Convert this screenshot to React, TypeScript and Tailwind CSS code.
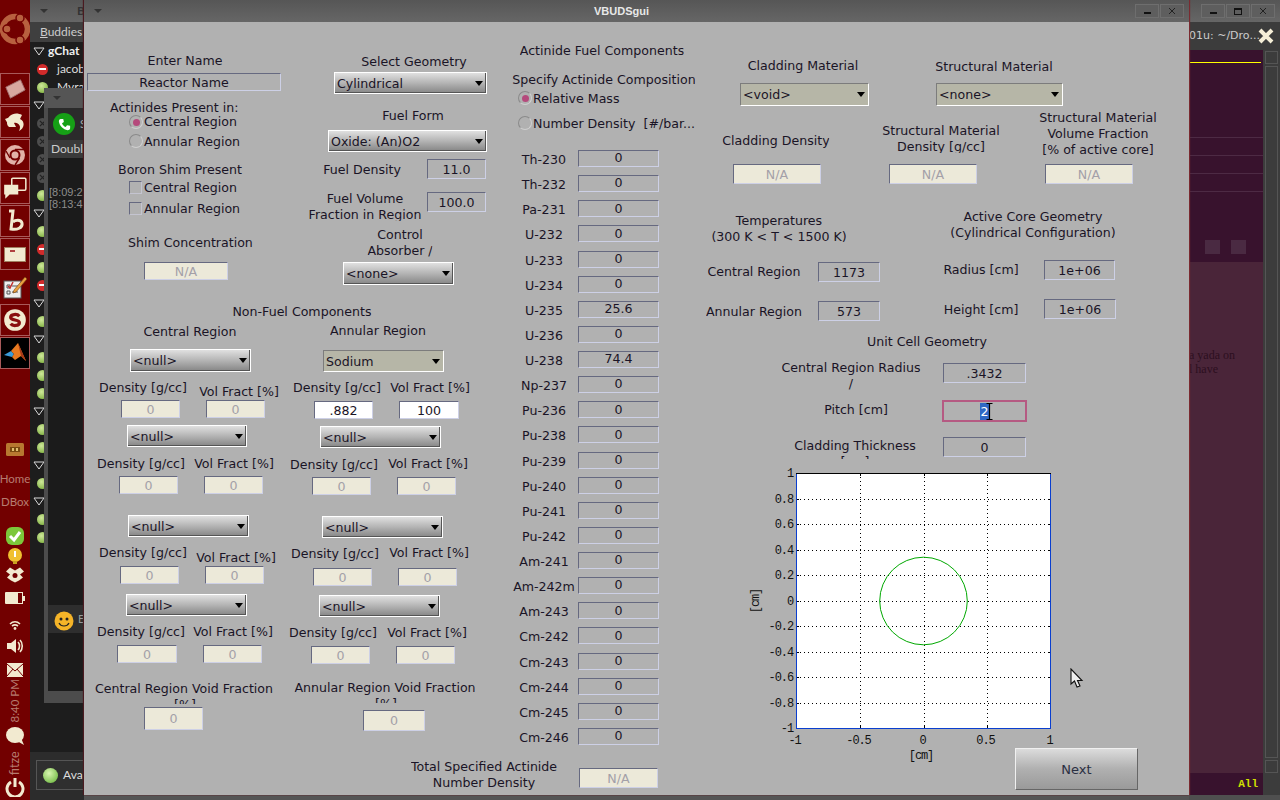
import React from 'react';

const Label = ({ c, children }: { c: string; children: React.ReactNode }) => (
  <div className={'absolute mt-[1px] -translate-x-1/2 text-center whitespace-nowrap leading-4 overflow-hidden ' + c}>{children}</div>
);
const Left = ({ c, children }: { c: string; children: React.ReactNode }) => (
  <div className={'absolute mt-[1px] whitespace-nowrap leading-4 ' + c}>{children}</div>
);
const Box = ({ c, v, kind = 'plain' }: { c: string; v: string; kind?: 'plain' | 'off' | 'on' }) => (
  <div
    className={
      'absolute flex items-center justify-center pt-[2px] border border-t-[#666980] border-l-[#666980] border-r-[#cdd0e6] border-b-[#cdd0e6] leading-none ' +
      (kind === 'off' ? 'bg-[#ece9d9] text-[#a3a0a8] ' : kind === 'on' ? 'bg-white text-[#1a1426] ' : 'text-[#1a1426] ') +
      c
    }
  >
    {v}
  </div>
);
const Select = ({ c, v, tan = false }: { c: string; v: string; tan?: boolean }) => (
  <div
    className={
      'absolute flex items-center justify-between pl-[2px] pr-[3px] border ' +
      (tan
        ? 'bg-[#b6b6a7] border-t-[#7c7c7c] border-l-[#7c7c7c] border-r-white border-b-white '
        : 'bg-gradient-to-b from-[#e0e0e0] via-[#b4b4b4] to-[#868686] border-white shadow-[inset_-1px_-1px_0_#555] ') +
      c
    }
  >
    <span className="leading-none mt-[2px]">{v}</span>
    <span className="w-0 h-0 border-x-[4px] border-x-transparent border-t-[5px] border-t-black" />
  </div>
);
const Radio = ({ c, on = false }: { c: string; on?: boolean }) => (
  <div className={'absolute w-[14px] h-[14px] rounded-full border border-[#d0d0d0] border-t-[#8a8a8a] border-l-[#8a8a8a] flex items-center justify-center ' + c}>
    {on && <div className="w-[7px] h-[7px] rounded-full bg-[#b54a7c]" />}
  </div>
);
const Check = ({ c }: { c: string }) => (
  <div className={'absolute w-[13px] h-[13px] border border-t-[#666980] border-l-[#666980] border-r-[#c4c4d0] border-b-[#c4c4d0] ' + c} />
);

const actinides = [
  ['Th-230', '0'], ['Th-232', '0'], ['Pa-231', '0'], ['U-232', '0'], ['U-233', '0'], ['U-234', '0'],
  ['U-235', '25.6'], ['U-236', '0'], ['U-238', '74.4'], ['Np-237', '0'], ['Pu-236', '0'], ['Pu-238', '0'],
  ['Pu-239', '0'], ['Pu-240', '0'], ['Pu-241', '0'], ['Pu-242', '0'], ['Am-241', '0'], ['Am-242m', '0'],
  ['Am-243', '0'], ['Cm-242', '0'], ['Cm-243', '0'], ['Cm-244', '0'], ['Cm-245', '0'], ['Cm-246', '0'],
];

const Plot = () => {
  const xs = [-1, -0.5, 0, 0.5, 1];
  const ys = [1, 0.8, 0.6, 0.4, 0.2, 0, -0.2, -0.4, -0.6, -0.8, -1];
  const X = (v: number) => Math.round(796 + (v + 1) * 127.5) + 0.5;
  const Y = (v: number) => Math.round(473 + (1 - v) * 127.5) + 0.5;
  return (
    <svg viewBox="745 465 320 300" className="absolute left-[661px] top-[443px] w-[320px] h-[300px]">
      <rect x="796" y="473" width="255" height="255" fill="#fff" />
      <g shapeRendering="crispEdges">
        {xs.slice(1, -1).map((v) => (
          <line key={v} x1={X(v)} x2={X(v)} y1="473" y2="728" stroke="#000" strokeWidth="1" strokeDasharray="1 3" />
        ))}
        {ys.slice(1, -1).map((v) => (
          <line key={v} y1={Y(v)} y2={Y(v)} x1="796" x2="1051" stroke="#000" strokeWidth="1" strokeDasharray="1 3" />
        ))}
        {xs.slice(1, -1).map((v) => (
          <g key={v} stroke="#000">
            <line x1={X(v)} x2={X(v)} y1="473" y2="476" />
            <line x1={X(v)} x2={X(v)} y1="725" y2="728" />
          </g>
        ))}
        {ys.slice(1, -1).map((v) => (
          <g key={v} stroke="#000">
            <line y1={Y(v)} y2={Y(v)} x1="796" x2="799" />
            <line y1={Y(v)} y2={Y(v)} x1="1048" x2="1051" />
          </g>
        ))}
      </g>
      <circle cx="923.5" cy="601" r="43.8" fill="none" stroke="#00a800" strokeWidth="1" />
      <rect x="796.5" y="473.5" width="254" height="255" fill="none" stroke="#0a3ecf" strokeWidth="1" />
      <line x1="796" x2="1051" y1="473.5" y2="473.5" stroke="#000" />
      <g fontFamily="'Liberation Mono', monospace" fontSize="12" letterSpacing="-1.1" fill="#111">
        {ys.map((v) => (
          <text key={v} x="793" y={Y(v) + 3.5} textAnchor="end">
            {v === 0 ? '0' : String(v)}
          </text>
        ))}
        {xs.map((v) => (
          <text key={v} x={X(v) - 2} y="744" textAnchor="middle">
            {String(v)}
          </text>
        ))}
        <text x="921" y="759" textAnchor="middle">[cm]</text>
        <text x="0" y="0" textAnchor="middle" transform="translate(759 601) rotate(-90)">[cm]</text>
      </g>
    </svg>
  );
};

const Tile = ({ children, c = '' }: { children: React.ReactNode; c?: string }) => (
  <div className={'w-[30px] h-[32px] border border-[#a85a5a] flex items-center justify-center ' + c}>{children}</div>
);

const cream = '#f2ead0';
const Launcher = () => (
  <div className="w-[30px] h-[800px] shrink-0 bg-[#720000] flex flex-col items-center relative z-10 font-['Lato',sans-serif]">
    <svg viewBox="0 0 30 40" className="w-[30px] h-[40px] mt-[9px] mb-[24px]">
      <circle cx="15" cy="20" r="12.5" fill="none" stroke="#b8603f" strokeWidth="5.5" />
      <circle cx="7" cy="20" r="4" fill="#b8603f" stroke="#720000" strokeWidth="1.5" />
      <circle cx="20" cy="9" r="4" fill="#b8603f" stroke="#720000" strokeWidth="1.5" />
      <circle cx="20" cy="31" r="4" fill="#b8603f" stroke="#720000" strokeWidth="1.5" />
    </svg>
    <div className="flex flex-col gap-[1px]">
      <Tile>
        <svg viewBox="0 0 24 24" className="w-[22px] h-[22px]">
          <path d="M2 10 L18 2 L23 13 L7 22 Z" fill="#d8a8a0" stroke="#a07070" />
        </svg>
      </Tile>
      <Tile>
        <svg viewBox="0 0 24 24" className="w-[24px] h-[24px]">
          <path d="M4 13 C4 5 12 1 19 5 L17 9 C22 11 22 18 16 21 C19 16 15 12 11 13 L13 17 L6 17 C5 16 4 15 4 13Z" fill={cream} />
          <path d="M10 6 L2 9 L5 14Z" fill={cream} />
        </svg>
      </Tile>
      <Tile>
        <svg viewBox="0 0 24 24" className="w-[24px] h-[24px]">
          <circle cx="12" cy="12" r="10" fill="#e2b2a8" />
          <circle cx="12" cy="12" r="5.5" fill="#720000" />
          <circle cx="12" cy="12" r="3.5" fill="#e2b2a8" />
          <path d="M12 6.5 L21 6.5 M7 15 L3 8 M16.5 15 L12 22" stroke="#720000" strokeWidth="1.4" />
        </svg>
      </Tile>
      <Tile>
        <svg viewBox="0 0 24 24" className="w-[26px] h-[26px]">
          <rect x="9" y="3" width="13" height="11" rx="1" fill="none" stroke={cream} strokeWidth="1.4" />
          <path d="M2 9 H15 V18 H7 L3 22 V18 H2Z" fill={cream} />
        </svg>
      </Tile>
      <Tile>
        <svg viewBox="0 0 24 24" className="w-[24px] h-[24px]">
          <path d="M6 2 L10 2 L8 20 C14 21 20 19 19 14 C18 10 12 11 10 13" fill="none" stroke={cream} strokeWidth="3" />
        </svg>
      </Tile>
      <Tile>
        <div className="w-[22px] h-[15px] bg-[#f2ead0] border border-[#a08060] relative">
          <span className="absolute left-[5px] top-[2px] w-[5px] h-[2px] bg-[#b04040]" />
        </div>
      </Tile>
      <div className="w-[30px] h-[32px] flex items-center justify-center">
        <svg viewBox="0 0 26 26" className="w-[26px] h-[26px]">
          <rect x="2" y="7" width="17" height="17" fill="#eee" stroke="#555" />
          <path d="M5 11 H8 V14 H5Z M5 17 H8 V20 H5Z M10 12 H16 M10 18 H16" fill="none" stroke="#555" />
          <path d="M6 12 L8 14 L11 8" stroke="#c03030" strokeWidth="1.5" fill="none" />
          <path d="M12 16 L23 3 L25 5 L14 18 L11 19Z" fill="#e8a040" stroke="#704010" strokeWidth=".6" />
        </svg>
      </div>
      <Tile>
        <svg viewBox="0 0 24 24" className="w-[26px] h-[26px]">
          <circle cx="12" cy="12" r="10" fill={cream} />
          <path d="M16 8.5 C14 6 8 6.5 8 9.5 C8 13 16 11 16 14.5 C16 17.5 10 18 8 15.5" fill="none" stroke="#8a1010" strokeWidth="3" />
        </svg>
      </Tile>
      <Tile c="bg-black border-[#888]">
        <svg viewBox="0 0 24 24" className="w-[24px] h-[24px]">
          <path d="M1 14 L8 10 L11 13 L9 16Z" fill="#3a9ad8" />
          <path d="M8 10 L15 2 L23 20 L18 15 L12 19 L9 16 L11 13Z" fill="#e87a20" />
          <path d="M15 2 L23 20 L18 15 Z" fill="#a83818" />
        </svg>
      </Tile>
    </div>
    <svg viewBox="0 0 20 18" className="w-[20px] h-[18px] mt-[71px]">
      <rect x="1" y="3" width="18" height="13" rx="1.5" fill="#b87830" />
      <rect x="5" y="7" width="10" height="5" fill="#7a4a10" />
      <rect x="7" y="8" width="2" height="3" fill="#e0c070" />
      <rect x="11" y="8" width="2" height="3" fill="#e0c070" />
    </svg>
    <div className="mt-[13px] h-[16px] leading-4 text-[11.5px] text-[#b67c70]">Home</div>
    <div className="mt-[7px] h-[16px] leading-4 text-[11.5px] text-[#b67c70]">DBox</div>
    <svg viewBox="0 0 20 20" className="w-[20px] h-[20px] mt-[16px]">
      <rect x="1" y="1" width="18" height="18" rx="6" fill="#7cc83a" />
      <path d="M5 10 L9 14 L15 6" fill="none" stroke="#fff" strokeWidth="3" />
    </svg>
    <svg viewBox="0 0 16 18" className="w-[16px] h-[18px] mt-[1px]">
      <circle cx="8" cy="8" r="7" fill="#f0c030" />
      <rect x="6" y="14" width="4" height="3" fill="#c8a020" />
      <path d="M8 4 V10" stroke="#fff" strokeWidth="2" />
    </svg>
    <svg viewBox="0 0 20 18" className="w-[20px] h-[19px]">
      <path d="M5 2 L10 5 L15 2 L19 6 L15 9 L18 12 L14 15 L10 17 L6 15 L2 12 L5 9 L1 6Z" fill={cream} />
      <circle cx="10" cy="10" r="2.5" fill="#720000" />
    </svg>
    <div className="mt-[7px] flex items-center h-[14px]">
      <div className="w-[12px] h-[12px] bg-[#f2ead0] rounded-l-[1px]" />
      <div className="w-[6px] h-[12px] border border-[#f2ead0]" />
      <div className="w-[2px] h-[5px] bg-[#f2ead0]" />
    </div>
    <svg viewBox="0 0 16 12" className="w-[16px] h-[12px] mt-[14px]">
      <path d="M3 5 C6 2 10 2 13 5 M5 7 C7 5.500 9 5.500 11 7" fill="none" stroke={cream} strokeWidth="1.6" />
      <circle cx="8" cy="9.500" r="1.4" fill={cream} />
    </svg>
    <svg viewBox="0 0 18 18" className="w-[18px] h-[18px] mt-[6px]">
      <path d="M1 6 H5 L10 2 V16 L5 12 H1Z" fill={cream} />
      <path d="M12 5 C14 7 14 11 12 13 M14 3 C17 6 17 12 14 15" fill="none" stroke={cream} strokeWidth="1.6" />
    </svg>
    <div className="mt-[8px] w-[16px] h-[14px] bg-[#f2ead0] relative overflow-hidden">
      <svg viewBox="0 0 16 14" className="absolute inset-0 w-[16px] h-[14px]">
        <path d="M0 1 L8 8 L16 1 M0 13 L6 6 M16 13 L10 6" fill="none" stroke="#720000" />
      </svg>
    </div>
    <div className="mt-[4px] h-[40px] w-[16px] flex items-center justify-center">
      <span className="-rotate-90 whitespace-nowrap text-[11.5px] leading-none text-[#b67c70]">8:40 PM</span>
    </div>
    <svg viewBox="0 0 20 21" className="w-[20px] h-[21px] mt-[5px]">
      <ellipse cx="10" cy="9" rx="9" ry="8" fill={cream} />
      <path d="M12 15 L19 19 L16 12Z" fill={cream} />
    </svg>
    <div className="mt-[4px] h-[24px] w-[16px] flex items-center justify-center">
      <span className="-rotate-90 whitespace-nowrap text-[12.5px] leading-none text-[#b67c70]">fitze</span>
    </div>
    <svg viewBox="0 0 20 20" className="w-[20px] h-[20px] mt-[2px]">
      <path d="M6 5 A8 8 0 1 0 14 5" fill="none" stroke={cream} strokeWidth="3" />
      <path d="M10 1 V10" stroke={cream} strokeWidth="3" />
    </svg>
  </div>
);

const Dot = ({ k }: { k: string }) => {
  if (k === 't')
    return (
      <svg viewBox="0 0 12 9" className="w-[12px] h-[9px] ml-[3px]">
        <path d="M1 1 H11 L6 8Z" fill="#1d1d1d" stroke="#d8d8d8" strokeWidth="1" />
      </svg>
    );
  if (k === 'r')
    return (
      <span className="w-[11px] h-[11px] rounded-full ml-[7px] bg-[#d22b2b] flex items-center justify-center">
        <span className="w-[7px] h-[2px] bg-white" />
      </span>
    );
  if (k === 'g') return <span className="w-[11px] h-[11px] rounded-full ml-[7px] bg-[radial-gradient(circle_at_40%_35%,#cfe89a,#6fa52e)]" />;
  return (
    <span className="w-[11px] h-[11px] rounded-full ml-[7px] bg-[#4d4d4d] flex items-center justify-center">
      <svg viewBox="0 0 8 8" className="w-[7px] h-[7px]">
        <path d="M1 1 L7 7 M7 1 L1 7" stroke="#222" strokeWidth="1.4" />
      </svg>
    </span>
  );
};

const buddyRows = 'trgtkkkkgtgrgrtgtgggtggtgtgg'.split('');

const Chrome = ({ c, children }: { c: string; children?: React.ReactNode }) => (
  <div className={'h-[22px] bg-gradient-to-b from-[#565656] to-[#666] flex items-center ' + c}>{children}</div>
);

const WinBtn = ({ t }: { t: string }) => (
  <div className="w-[24px] h-[14px] border border-[#6e6e6e] bg-[#5e5e5e] flex items-center justify-center text-[#222] text-[11px] leading-none">
    {t === 'min' && <span className="w-[7px] h-[2px] bg-[#111] mt-[4px]" />}
    {t === 'max' && <span className="w-[8px] h-[7px] border border-[#111] border-t-2" />}
    {t === 'x' && (
      <svg viewBox="0 0 8 8" className="w-[8px] h-[8px]">
        <path d="M1 1 L7 7 M7 1 L1 7" stroke="#222" strokeWidth="1" />
      </svg>
    )}
  </div>
);

const Cursor = () => (
  <svg viewBox="0 0 14 20" className="absolute left-[986px] top-[646px] w-[14px] h-[20px]">
    <path d="M1 1 L1 16 L4.500 13 L7 19 L10 18 L7.500 12.500 L12 12.500Z" fill="#eee" stroke="#111" strokeWidth="1.1" />
  </svg>
);

export default function App() {
  return (
    <div className="w-[1280px] h-[800px] overflow-hidden flex bg-[#1e1e1e] font-['DejaVu_Sans',sans-serif] text-[12.6px] text-[#1a1426]">
      <Launcher />
      <div className="relative flex-1 h-[800px]">
        {/* buddy list window */}
        <div className="absolute left-0 top-0 w-[70px] h-[800px] bg-[#1d1d1d] text-white font-['Lato',sans-serif]">
          <Chrome c="pl-[10px]">
            <span className="w-0 h-0 border-x-[4px] border-x-transparent border-t-[4px] border-t-[#333]" />
            <span className="ml-[29px] text-[#333] font-bold text-[12px]">B</span>
          </Chrome>
          <div className="h-[20px] bg-[#3f3f3f] pl-[10px] text-[#ccc] text-[12px] leading-[20px]">
            <span className="underline">B</span>uddies
          </div>
          <div className="relative">
            {buddyRows.map((k, i) => (
              <div key={i} className="h-[18px] flex items-center">
                <Dot k={k} />
              </div>
            ))}
            <span className="absolute left-[18px] top-[1px] text-[12px] leading-4 font-bold text-[#eee]">gChat</span>
            <span className="absolute left-[27px] top-[19px] text-[12px] leading-4 text-[#ddd]">jacob</span>
            <span className="absolute left-[27px] top-[37px] text-[12px] leading-4 text-[#ddd]">Myra</span>
          </div>
          <div className="absolute left-0 right-0 top-[752px] bottom-0 bg-[#2c2c2c] pl-[6px] pt-[8px]">
            <div className="h-[30px] border border-[#555] bg-[#2f2f2f] flex items-center pl-[6px] gap-[5px]">
              <span className="w-[15px] h-[15px] rounded-full bg-[radial-gradient(circle_at_40%_35%,#d8f5b0,#5fb030)]" />
              <span className="text-[#ddd] text-[12px]">Avai</span>
            </div>
          </div>
        </div>
        {/* chat window */}
        <div className="absolute left-[14px] top-[88px] w-[60px] h-[615px] bg-[#4c4c4c] pl-[4px] pr-0 font-['Lato',sans-serif]">
          <div className="h-[20px] -ml-[4px] bg-[#555] pl-[9px] flex items-center">
            <span className="w-0 h-0 border-x-[4px] border-x-transparent border-t-[4px] border-t-[#333]" />
          </div>
          <div className="h-[32px] bg-[#2b2b2b] flex items-center pl-[5px]">
            <span className="w-[22px] h-[22px] rounded-full bg-[#16a016] flex items-center justify-center">
              <svg viewBox="0 0 24 24" className="w-[15px] h-[15px]">
                <path d="M6 3 L10 3 L11 8 L8 10 C9 13 11 15 14 16 L16 13 L21 14 L21 18 C21 20 19 21 17 21 C10 20 4 14 3 7 C3 5 4 3 6 3Z" fill="#fff" />
              </svg>
            </span>
            <span className="ml-[5px] text-[11px] text-[#aaa]">S</span>
          </div>
          <div className="h-[18px] bg-[#3a3a3a] pl-[3px] text-[12px] leading-[18px] text-[#ccc]">Double</div>
          <div className="h-[447px] bg-[#1b1b1b] pt-[28px] pl-[1px] text-[11px] leading-[12px] text-[#8d8d8d] font-['Liberation_Sans',sans-serif]">
            <div>[8:09:2</div>
            <div>[8:13:4</div>
          </div>
          <div className="h-[28px] bg-[#2e2e2e] flex items-center pl-[6px] gap-[4px]">
            <svg viewBox="0 0 20 20" className="w-[20px] h-[20px] mt-[4px]">
              <circle cx="10" cy="10" r="9.500" fill="#f5b428" />
              <circle cx="7" cy="8" r="1.500" fill="#222" />
              <circle cx="13" cy="8" r="1.500" fill="#222" />
              <path d="M5 12 C7 16 13 16 15 12" fill="none" stroke="#222" strokeWidth="1.200" />
            </svg>
            <span className="text-[11px] text-[#999]">E</span>
          </div>
          <div className="h-[58px] bg-[#1b1b1b]" />
        </div>
        {/* terminal window */}
        <div className="absolute left-[1159px] top-0 w-[91px] h-[800px] bg-[#4f4f4f] flex flex-col">
          <Chrome c="justify-end pr-[5px] gap-[1px]">
            <WinBtn t="min" />
            <WinBtn t="max" />
            <WinBtn t="x" />
          </Chrome>
          <div className="h-[28px] bg-[#3c3c3c] relative flex items-center text-[#ccc] text-[11px] whitespace-nowrap overflow-hidden">
            01u: ~/Dro...
            <svg viewBox="0 0 16 16" className="absolute right-[6px] top-[6px] w-[16px] h-[16px]">
              <path d="M2 2 L14 14 M14 2 L2 14" stroke="#f6efd8" strokeWidth="4" />
            </svg>
          </div>
          <div className="flex-1 flex min-h-0">
            <div className="flex-1 flex flex-col">
              <div className="h-[212px] bg-[#38122d] pt-[12px] relative">
                <div className="h-[1px] bg-[#ffff00] mr-[2px]" />
                <div className="h-[1px] bg-[#4d2a44] mt-[74px]" />
                <div className="h-[1px] bg-[#4d2a44] mt-[17px]" />
                <div className="h-[1px] bg-[#4d2a44] mt-[17px]" />
                <div className="h-[1px] bg-[#4d2a44] mt-[17px]" />
                <div className="flex gap-[11px] ml-[16px] mt-[48px]">
                  <div className="w-[15px] h-[14px] bg-[#4a2a42]" />
                  <div className="w-[15px] h-[14px] bg-[#4a2a42]" />
                </div>
              </div>
              <div className="h-[511px] bg-[#4a2539] pt-[86px] text-[12px] leading-[14px] text-[#2c0f1f] font-['Liberation_Serif',serif] whitespace-nowrap overflow-hidden">
                <div>a yada on</div>
                <div>l have</div>
              </div>
              <div className="h-[22px] bg-[#38122d] pr-[5px] text-right text-[11px] leading-[22px] text-[#cfe000] font-['Liberation_Mono',monospace] font-bold">All</div>
            </div>
            <div className="w-[17px] bg-[#3c3c3c] flex flex-col items-center pt-[1px] pb-[22px] gap-[2px]">
              <div className="w-[13px] h-[13px] border border-[#555]" />
              <div className="w-[13px] flex-1 border border-[#555]" />
              <div className="w-[13px] h-[13px] border border-[#555]" />
            </div>
          </div>
          <div className="h-[5px] bg-[#4f4f4f]" />
        </div>
        {/* dialog */}
        <div className="absolute left-[54px] top-0 w-[1105px] h-[795px] flex flex-col shadow-[1px_0_1px_#7a2a30,-1px_0_1px_#4a1a20,0_5px_0_#555]">
          <Chrome c="relative justify-between pl-[10px] pr-[5px]">
            <span className="w-0 h-0 border-x-[4px] border-x-transparent border-t-[4px] border-t-[#333]" />
            <span className="absolute left-0 right-[30px] text-center text-[11px] font-bold text-[#e8e8e8] leading-[20px] font-['Liberation_Sans',sans-serif]">VBUDSgui</span>
            <div className="flex gap-[1px] relative">
              <WinBtn t="min" />
              <WinBtn t="x" />
            </div>
          </Chrome>
          <div className="relative flex-1 bg-[#b1b1b1]">
            <Label c="left-[101px] top-[30px]">Enter Name</Label>
            <Box c="left-[3px] top-[51px] w-[194px] h-[18px]" v="Reactor Name" />
            <Left c="left-[26px] top-[77px]">Actinides Present in:</Left>
            <Radio c="left-[45px] top-[93px]" on />
            <Left c="left-[60px] top-[91px]">Central Region</Left>
            <Radio c="left-[45px] top-[112px]" />
            <Left c="left-[60px] top-[111px]">Annular Region</Left>
            <Left c="left-[34px] top-[139px]">Boron Shim Present</Left>
            <Check c="left-[45px] top-[159px]" />
            <Left c="left-[60px] top-[157px]">Central Region</Left>
            <Check c="left-[45px] top-[180px]" />
            <Left c="left-[60px] top-[178px]">Annular Region</Left>
            <Left c="left-[44px] top-[212px]">Shim Concentration</Left>
            <Box kind="off" c="left-[60px] top-[240px] w-[84px] h-[18px]" v="N/A" />

            <Label c="left-[330px] top-[31px]">Select Geometry</Label>
            <Select c="left-[250px] top-[50px] w-[153px] h-[22px]" v="Cylindrical" />
            <Label c="left-[329px] top-[85px]">Fuel Form</Label>
            <Select c="left-[244px] top-[108px] w-[159px] h-[22px]" v="Oxide: (An)O2" />
            <Label c="left-[278px] top-[139px]">Fuel Density</Label>
            <Box c="left-[343px] top-[137px] w-[59px] h-[20px]" v="11.0" />
            <Label c="left-[281px] top-[168px] h-[30px]">
              Fuel Volume
              <br />
              Fraction in Region
            </Label>
            <Box c="left-[343px] top-[170px] w-[59px] h-[20px]" v="100.0" />
            <Label c="left-[316px] top-[204px] h-[32px]">
              Control
              <br />
              Absorber /
            </Label>
            <Select c="left-[259px] top-[240px] w-[111px] h-[23px]" v="<none>" />

            <Label c="left-[218px] top-[281px]">Non-Fuel Components</Label>
            <Label c="left-[106px] top-[301px]">Central Region</Label>
            <Label c="left-[294px] top-[300px]">Annular Region</Label>

            <Select c="left-[46px] top-[327px] w-[121px] h-[23px]" v="<null>" />
            <Select tan c="left-[239px] top-[328px] w-[121px] h-[22px]" v="Sodium" />
            <Label c="left-[59px] top-[357px]">Density [g/cc]</Label>
            <Label c="left-[155px] top-[361px]">Vol Fract [%]</Label>
            <Box kind="off" c="left-[37px] top-[378px] w-[59px] h-[18px]" v="0" />
            <Box kind="off" c="left-[122px] top-[378px] w-[59px] h-[18px]" v="0" />
            <Label c="left-[253px] top-[357px]">Density [g/cc]</Label>
            <Label c="left-[346px] top-[357px]">Vol Fract [%]</Label>
            <Box kind="on" c="left-[230px] top-[379px] w-[59px] h-[18px]" v=".882" />
            <Box kind="on" c="left-[315px] top-[379px] w-[60px] h-[18px]" v="100" />

            <Select c="left-[43px] top-[403px] w-[120px] h-[22px]" v="<null>" />
            <Select c="left-[236px] top-[404px] w-[121px] h-[22px]" v="<null>" />
            <Label c="left-[57px] top-[433px]">Density [g/cc]</Label>
            <Label c="left-[150px] top-[433px]">Vol Fract [%]</Label>
            <Label c="left-[250px] top-[434px]">Density [g/cc]</Label>
            <Label c="left-[344px] top-[433px]">Vol Fract [%]</Label>
            <Box kind="off" c="left-[35px] top-[454px] w-[59px] h-[18px]" v="0" />
            <Box kind="off" c="left-[120px] top-[454px] w-[59px] h-[18px]" v="0" />
            <Box kind="off" c="left-[228px] top-[455px] w-[59px] h-[18px]" v="0" />
            <Box kind="off" c="left-[313px] top-[455px] w-[59px] h-[18px]" v="0" />

            <Select c="left-[44px] top-[493px] w-[121px] h-[22px]" v="<null>" />
            <Select c="left-[238px] top-[494px] w-[121px] h-[22px]" v="<null>" />
            <Label c="left-[59px] top-[522px]">Density [g/cc]</Label>
            <Label c="left-[152px] top-[527px]">Vol Fract [%]</Label>
            <Label c="left-[251px] top-[523px]">Density [g/cc]</Label>
            <Label c="left-[345px] top-[522px]">Vol Fract [%]</Label>
            <Box kind="off" c="left-[36px] top-[544px] w-[59px] h-[18px]" v="0" />
            <Box kind="off" c="left-[121px] top-[544px] w-[59px] h-[18px]" v="0" />
            <Box kind="off" c="left-[229px] top-[546px] w-[59px] h-[18px]" v="0" />
            <Box kind="off" c="left-[314px] top-[546px] w-[59px] h-[18px]" v="0" />

            <Select c="left-[42px] top-[572px] w-[121px] h-[22px]" v="<null>" />
            <Select c="left-[235px] top-[573px] w-[121px] h-[22px]" v="<null>" />
            <Label c="left-[57px] top-[601px]">Density [g/cc]</Label>
            <Label c="left-[149px] top-[601px]">Vol Fract [%]</Label>
            <Label c="left-[249px] top-[602px]">Density [g/cc]</Label>
            <Label c="left-[343px] top-[602px]">Vol Fract [%]</Label>
            <Box kind="off" c="left-[33px] top-[623px] w-[60px] h-[18px]" v="0" />
            <Box kind="off" c="left-[119px] top-[623px] w-[59px] h-[18px]" v="0" />
            <Box kind="off" c="left-[227px] top-[624px] w-[59px] h-[18px]" v="0" />
            <Box kind="off" c="left-[312px] top-[624px] w-[59px] h-[18px]" v="0" />

            <Label c="left-[100px] top-[658px]">Central Region Void Fraction</Label>
            <Label c="left-[101px] top-[674px] h-[7px]">[%]</Label>
            <Box kind="off" c="left-[60px] top-[685px] w-[59px] h-[23px]" v="0" />
            <Label c="left-[301px] top-[657px]">Annular Region Void Fraction</Label>
            <Label c="left-[302px] top-[673px] h-[7px]">[%]</Label>
            <Box kind="off" c="left-[279px] top-[688px] w-[62px] h-[21px]" v="0" />

            <Label c="left-[518px] top-[20px]">Actinide Fuel Components</Label>
            <Label c="left-[520px] top-[49px]">Specify Actinide Composition</Label>
            <Radio c="left-[434px] top-[69px]" on />
            <Left c="left-[449px] top-[68px]">Relative Mass</Left>
            <Radio c="left-[434px] top-[94px]" />
            <Left c="left-[449px] top-[93px]">Number Density&nbsp;&nbsp;[#/bar...</Left>

            <div className="absolute left-[426px] top-[124px] w-[233px] grid grid-cols-[68px_81px] auto-rows-[25.13px] items-center">
              {actinides.map(([n, v]) => (
                <React.Fragment key={n}>
                  <div className="text-center whitespace-nowrap leading-4 mt-[3px]">{n}</div>
                  <div className="h-[17px] flex items-center justify-center leading-none border border-t-[#666980] border-l-[#666980] border-r-[#cdd0e6] border-b-[#cdd0e6]">{v}</div>
                </React.Fragment>
              ))}
            </div>

            <Label c="left-[400px] top-[736px] h-[32px]">
              Total Specified Actinide
              <br />
              Number Density
            </Label>
            <Box kind="off" c="left-[495px] top-[746px] w-[79px] h-[20px]" v="N/A" />

            <Label c="left-[719px] top-[35px]">Cladding Material</Label>
            <Select tan c="left-[656px] top-[61px] w-[129px] h-[23px]" v="<void>" />
            <Label c="left-[910px] top-[36px]">Structural Material</Label>
            <Select tan c="left-[852px] top-[61px] w-[127px] h-[23px]" v="<none>" />
            <Label c="left-[692px] top-[110px]">Cladding Density</Label>
            <Label c="left-[857px] top-[100px] h-[30px]">
              Structural Material
              <br />
              Density [g/cc]
            </Label>
            <Label c="left-[1014px] top-[87px]">
              Structural Material
              <br />
              Volume Fraction
              <br />
              [% of active core]
            </Label>
            <Box kind="off" c="left-[649px] top-[142px] w-[88px] h-[20px]" v="N/A" />
            <Box kind="off" c="left-[805px] top-[142px] w-[88px] h-[20px]" v="N/A" />
            <Box kind="off" c="left-[961px] top-[142px] w-[88px] h-[20px]" v="N/A" />

            <Label c="left-[695px] top-[190px]">
              Temperatures
              <br />
              (300 K &lt; T &lt; 1500 K)
            </Label>
            <Label c="left-[949px] top-[186px]">
              Active Core Geometry
              <br />
              (Cylindrical Configuration)
            </Label>
            <Label c="left-[670px] top-[241px]">Central Region</Label>
            <Box c="left-[734px] top-[240px] w-[62px] h-[20px]" v="1173" />
            <Label c="left-[670px] top-[281px]">Annular Region</Label>
            <Box c="left-[734px] top-[279px] w-[62px] h-[20px]" v="573" />
            <Label c="left-[897px] top-[239px]">Radius [cm]</Label>
            <Box c="left-[960px] top-[238px] w-[71px] h-[20px]" v="1e+06" />
            <Label c="left-[897px] top-[279px]">Height [cm]</Label>
            <Box c="left-[960px] top-[277px] w-[72px] h-[20px]" v="1e+06" />

            <Label c="left-[843px] top-[311px]">Unit Cell Geometry</Label>
            <Label c="left-[767px] top-[337px] h-[34px]">
              Central Region Radius
              <br />/<br />
              Thickness [cm]
            </Label>
            <Box c="left-[859px] top-[341px] w-[83px] h-[20px]" v=".3432" />
            <Label c="left-[772px] top-[379px]">Pitch [cm]</Label>
            <div className="absolute left-[858px] top-[378px] w-[85px] h-[22px] border-2 border-[#b55a82] flex items-center justify-center leading-none">
              <span className="relative bg-[#2f68c4] text-white h-[17px] w-[9px] leading-[17px] text-center">
                2
                <svg viewBox="0 0 7 17" className="absolute left-[6px] top-0 w-[7px] h-[17px]">
                  <path d="M0.5 0.5 H6.5 M3.5 0.5 V16.5 M0.5 16.5 H6.5" stroke="#000" strokeWidth="1.2" fill="none" />
                </svg>
              </span>
            </div>
            <Label c="left-[771px] top-[415px] h-[21px]">
              Cladding Thickness
              <br />
              [cm]
            </Label>
            <Box c="left-[859px] top-[415px] w-[83px] h-[20px]" v="0" />

            <Plot />
            <button className="absolute left-[931px] top-[726px] w-[123px] h-[42px] pt-[1px] bg-gradient-to-b from-[#dcdcdc] via-[#b0b0b0] to-[#9a9a9a] border border-t-[#f0f0f0] border-l-[#f0f0f0] border-r-[#666] border-b-[#666] text-[13px] text-[#2a2f42]">
              Next
            </button>
            <Cursor />
          </div>
        </div>
      </div>
    </div>
  );
}
